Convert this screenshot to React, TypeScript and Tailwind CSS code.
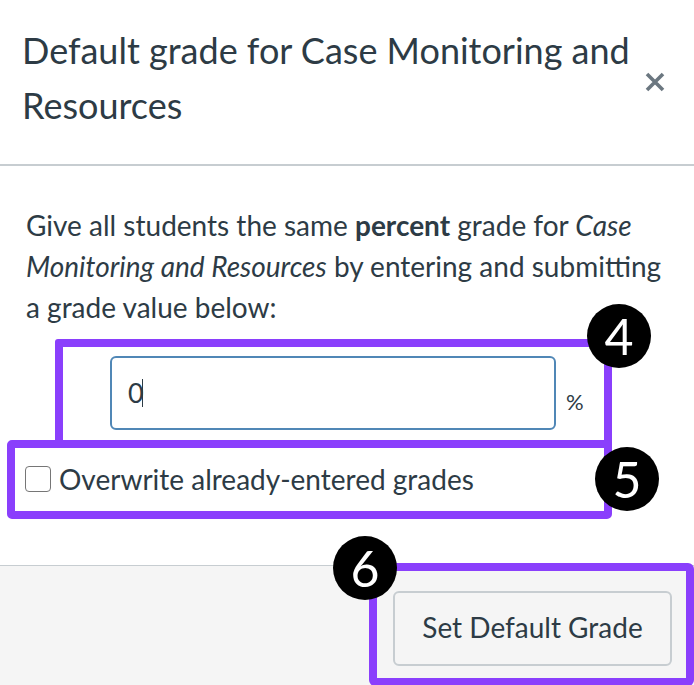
export default function App() {
  return (
    <div
      className="relative w-[694px] h-[685px] overflow-hidden bg-white text-[#2d3b45]"
      style={{ fontFamily: "Lato, 'Noto Sans', sans-serif" }}
    >
      {/* Header */}
      <header className="flex items-center justify-between h-[166px] border-b-2 border-[#c7cdd1] pl-[22px] pr-[28px]">
        <h2 className="text-[36px] leading-[55px] max-w-[615px] -mt-[8px]">
          Default grade for Case Monitoring and Resources
        </h2>
        <button className="text-[#6b7780]" aria-label="Close">
          <svg width="22" height="22" viewBox="0 0 22 22">
            <path d="M3 3 L19 19 M19 3 L3 19" stroke="currentColor" strokeWidth="3.6" strokeLinecap="butt" />
          </svg>
        </button>
      </header>

      {/* Body */}
      <div className="pl-[26px] pr-[14px] pt-[39px]">
        <p className="text-[28px] leading-[41px]">
          Give all students the same <strong className="font-bold">percent</strong> grade for{" "}
          <em>Case Monitoring and Resources</em> by entering and submitting a grade value below:
        </p>

        <div className="flex items-end mt-[28px] ml-[84px]">
          <div className="w-[446px] h-[74px] rounded-[6px] border-2 border-[#5087b6] flex items-center pl-[16px] text-[27px]">
            0<span className="w-[1.5px] h-[28px] bg-[#2d3b45] -ml-[2px]" />
          </div>
          <span className="ml-[10px] mb-[12px] text-[22px]">%</span>
        </div>

        <label className="flex items-center mt-[34px] -ml-[1px] text-[28px] leading-[30px]">
          <span className="w-[26px] h-[26px] rounded-[4px] border-[1.5px] border-[#767676] bg-white" />
          <span className="ml-[8px]">Overwrite already-entered grades</span>
        </label>
      </div>

      {/* Footer */}
      <footer className="absolute left-0 right-0 bottom-0 top-[565px] bg-[#f5f5f5] border-t border-[#c7cdd1] flex justify-end pt-[25px] pr-[22px]">
        <button className="w-[279px] h-[75px] rounded-[6px] border-2 border-[#c7cdd1] bg-[#f5f5f5] text-[28px] pb-[3px]">
          Set Default Grade
        </button>
      </footer>

      {/* Annotations */}
      <div className="absolute left-[55px] top-[339px] w-[557px] h-[109px] border-[8px] border-[#8a3ffc] rounded-[3px]" />
      <div className="absolute left-[7px] top-[440px] w-[605px] h-[79px] border-[8px] border-[#8a3ffc] rounded-[5px]" />
      <div className="absolute left-[369px] top-[563px] w-[325px] h-[123px] border-[8px] border-[#8a3ffc] rounded-[6px]" />

      <div className="absolute left-[587px] top-[304px] w-[64px] h-[64px] rounded-full bg-black text-white flex items-center justify-center text-[50px] leading-none">
        4
      </div>
      <div className="absolute left-[595px] top-[447px] w-[64px] h-[64px] rounded-full bg-black text-white flex items-center justify-center text-[50px] leading-none">
        5
      </div>
      <div className="absolute left-[333px] top-[536px] w-[64px] h-[64px] rounded-full bg-black text-white flex items-center justify-center text-[50px] leading-none">
        6
      </div>
    </div>
  );
}
